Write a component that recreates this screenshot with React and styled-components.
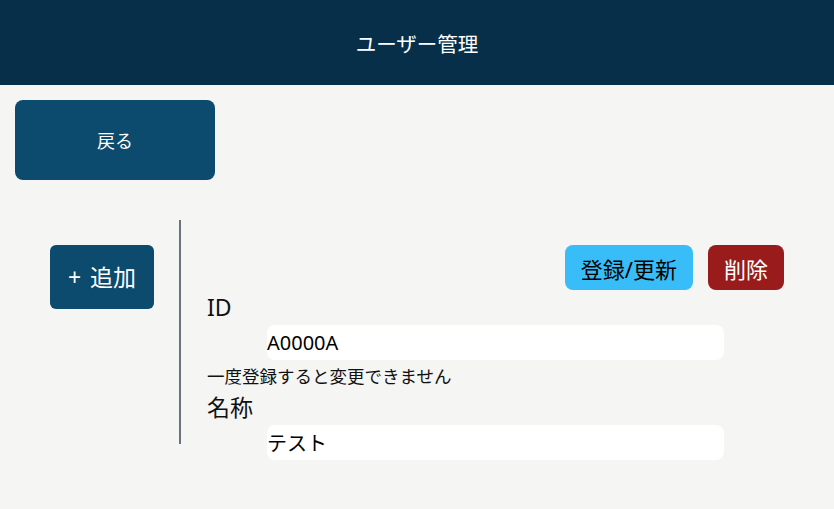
import React, { useState } from 'react';
import styled, { createGlobalStyle } from 'styled-components';

const GlobalStyle = createGlobalStyle`
  * { box-sizing: border-box; }
  body {
    margin: 0;
    background: #f5f5f4;
    font-family: "Noto Sans", "Noto Sans CJK JP", sans-serif;
    color: #111;
  }
`;

const Page = styled.div`
  min-height: 100vh;
  background: #f5f5f4;
`;

const Header = styled.header`
  height: 85px;
  background: #082f49;
  display: flex;
  align-items: center;
  justify-content: center;
`;

const Title = styled.h1`
  margin: 0;
  font-size: 20.5px;
  font-weight: 400;
  color: #fff;
`;

const Main = styled.main`
  padding-top: 15px;
`;

const BackButton = styled.button`
  display: block;
  margin-left: 15px;
  width: 200px;
  height: 80px;
  border: none;
  border-radius: 8px;
  background: #0c4a6e;
  color: #fff;
  font-family: inherit;
  font-size: 18px;
  cursor: pointer;
`;

const Content = styled.div`
  display: flex;
  align-items: flex-start;
  margin-top: 40px;
`;

const Sidebar = styled.aside`
  height: 224px;
  padding: 25px 25px 0 50px;
  border-right: 2px solid #6b7280;
`;

const AddButton = styled.button`
  width: 104px;
  height: 64px;
  border: none;
  border-radius: 6px;
  background: #0c4a6e;
  color: #fff;
  font-family: inherit;
  font-size: 23px;
  word-spacing: 3px;
  line-height: 1.5;
  padding: 0;
  cursor: pointer;
`;

const Editor = styled.section`
  flex: 1;
  padding: 25px 50px 0 26px;
`;

const Actions = styled.div`
  display: flex;
  justify-content: flex-end;
  gap: 15px;
`;

const ActionButton = styled.button`
  height: 45px;
  padding: 0 16px;
  border: none;
  border-radius: 8px;
  font-family: inherit;
  font-size: 22px;
  cursor: pointer;
  background: ${(p) => (p.$danger ? '#991b1b' : '#38bdf8')};
  color: ${(p) => (p.$danger ? '#fff' : '#000')};
`;

const Label = styled.label`
  display: block;
  font-size: 23px;
  line-height: 35px;
`;

const Input = styled.input`
  display: block;
  margin-left: 60px;
  width: 457px;
  height: 35px;
  padding: 0;
  border: none;
  border-radius: 8px;
  background: #fff;
  font-family: inherit;
  font-size: 20px;
  color: #000;
  outline: none;
`;

const Note = styled.p`
  margin: 0;
  padding-top: 3px;
  font-size: 17.5px;
  line-height: 27px;
`;

export default function App() {
  const [id, setId] = useState('A0000A');
  const [name, setName] = useState('テスト');

  return (
    <Page>
      <GlobalStyle />
      <Header>
        <Title>ユーザー管理</Title>
      </Header>
      <Main>
        <BackButton>戻る</BackButton>
        <Content>
          <Sidebar>
            <AddButton>+ 追加</AddButton>
          </Sidebar>
          <Editor>
            <Actions>
              <ActionButton>登録/更新</ActionButton>
              <ActionButton $danger>削除</ActionButton>
            </Actions>
            <Label htmlFor="user-id">ID</Label>
            <Input id="user-id" value={id} onChange={(e) => setId(e.target.value)} />
            <Note>一度登録すると変更できません</Note>
            <Label htmlFor="user-name">名称</Label>
            <Input id="user-name" value={name} onChange={(e) => setName(e.target.value)} />
          </Editor>
        </Content>
      </Main>
    </Page>
  );
}
